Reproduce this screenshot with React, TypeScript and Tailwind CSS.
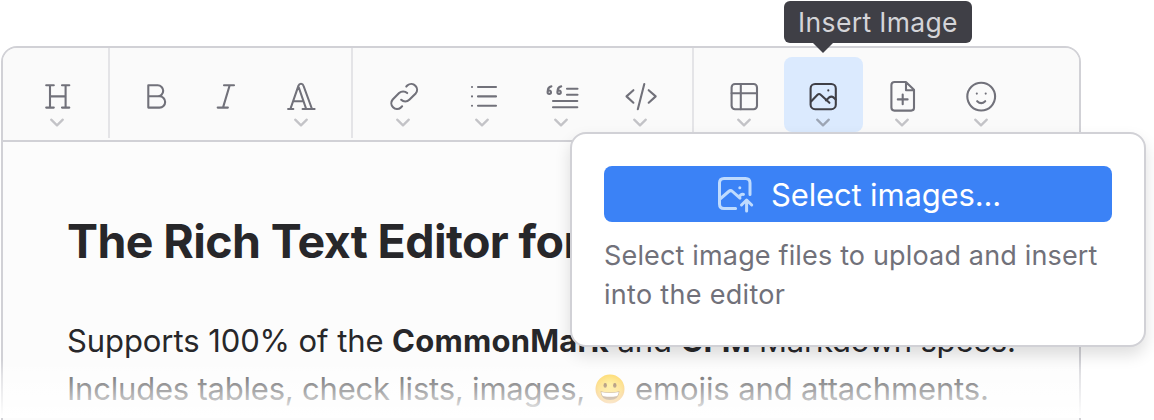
import type { ReactNode } from "react";

type ToolProps = {
  label: string;
  children: ReactNode;
  menu?: boolean;
  active?: boolean;
};

function Tool({ label, children, menu = true, active = false }: ToolProps) {
  return (
    <button
      type="button"
      aria-label={label}
      className={`flex h-[75px] shrink-0 flex-col items-center rounded-lg pt-5 ${
        menu ? "w-[79px]" : "w-[70px]"
      } ${active ? "bg-[#dbeafe] text-[#3f3f46]" : "text-[#71717a]"}`}
    >
      <svg
        viewBox="0 0 40 40"
        className="h-10 w-10 shrink-0"
        fill="none"
        stroke="currentColor"
        strokeWidth="2.1"
        strokeLinecap="round"
        strokeLinejoin="round"
      >
        {children}
      </svg>
      {menu && (
        <svg
          viewBox="0 0 16 10"
          className="h-2.5 w-4 shrink-0"
          fill="none"
          stroke="currentColor"
          strokeOpacity="0.4"
          strokeWidth="2.3"
          strokeLinecap="round"
          strokeLinejoin="round"
        >
          <path d="M2.2 2.7 8 8.3l5.8-5.6" />
        </svg>
      )}
    </button>
  );
}

function Group({ children, className }: { children: ReactNode; className: string }) {
  return (
    <div className={`flex h-[90px] shrink-0 items-start border-[#e4e4e7] pt-[9px] ${className}`}>
      {children}
    </div>
  );
}

function Toolbar() {
  return (
    <div className="flex h-[94px] shrink-0 border-b-2 border-[#d1d1d6] bg-[#fafafa] pl-1">
      <Group className="border-r-2 pl-2.5 pr-3">
        <Tool label="Heading">
          <path d="M9.2 8.3h7.6M25 8.3h7.3M9.2 30.6h7.6M25 30.6h7.3M13 8.3v22.3M28.6 8.3v22.3M13 19.4h15.6" />
        </Tool>
      </Group>
      <Group className="border-r-2 px-[11px]">
        <Tool label="Bold" menu={false}>
          <path d="M12.3 8.3h9.4a5.5 5.5 0 0 1 0 11h-9.4zM12.3 19.3h11.2a5.65 5.65 0 0 1 0 11.3H12.3z" />
        </Tool>
        <Tool label="Italic" menu={false}>
          <path d="M18 8.3h10M11.7 30.6h10.2M23.7 8.3 17 30.6" />
        </Tool>
        <Tool label="Text style">
          <path d="M7.1 32h5.2M21.6 32h12M9.4 32l8.1-23.4q.7-1.9 2.5-1.9t2.4 1.8L31 32M17.8 10.5 25.2 32M12.4 24.3h10" />
        </Tool>
      </Group>
      <Group className="border-r-2 pl-2.5 pr-[13px]">
        <Tool label="Link">
          <path d="M23.3 9.6l1.3-1.3a5.75 5.75 0 0 1 8.1 8.1l-6.4 6.4a5.75 5.75 0 0 1-8.1 0" />
          <path d="M19.1 29.3l-1.3 1.3a5.75 5.75 0 0 1-8.1-8.1l6.4-6.4a5.75 5.75 0 0 1 8.1 0" />
        </Tool>
        <Tool label="List">
          <path d="M16 10h18M16 19.4h18M16 28.7h18M10 10h.02M10 19.4h.02M10 28.7h.02" />
        </Tool>
        <Tool label="Quote">
          <path d="M26 11.7h10.5M26 17.7h10.5M12 24h24.3M12 30.3h24.3" />
          <path d="M10.4 9.4Q6.6 10 6.6 15.2a1.7 1.7 0 1 0 1.7-1.7q-1.2 0-1.7 1M20.2 9.4q-3.8.6-3.8 5.8a1.7 1.7 0 1 0 1.7-1.7q-1.2 0-1.7 1" />
        </Tool>
        <Tool label="Code">
          <path d="M13.4 13.2 6.5 19.4l6.9 6.3M28.7 13.2l7 6.2-7 6.3M24.3 7l-6.5 25.2" />
        </Tool>
      </Group>
      <Group className="px-[11px] *:pr-px">
        <Tool label="Table">
          <rect x="7.6" y="7" width="25.4" height="25.2" rx="3.4" />
          <path d="M16.8 7v25.2M7.6 16.2h25.4" />
        </Tool>
        <Tool label="Insert Image" active>
          <rect x="7.6" y="7" width="25.2" height="25.2" rx="4.5" />
          <path d="M8.3 24.3l6.2-6.5q1.6-1.6 3.2 0l8.7 8M22.9 23.4l3.2-3q2.3-1.7 4.4 0l2.2 2.2M25.3 13.4h.02" />
        </Tool>
        <Tool label="Attach File">
          <path d="M12.6 5h11.3l8.1 7.8v18q0 2.8-2.8 2.8H12.4q-3 0-3-3V8q0-3 3.2-3zM24 5.2v8h7.8M20.7 17.5v9.8M15.8 22.4h9.8" />
        </Tool>
        <Tool label="Emoji">
          <circle cx="20.2" cy="19.6" r="13.9" />
          <path d="M16.2 24.2q4 3.9 8 0M15.8 16.6h.02M24.7 16.6h.02" />
        </Tool>
      </Group>
    </div>
  );
}

function GrinningFace() {
  return (
    <svg viewBox="0 0 30 30" className="ml-[10px] mr-[10px] inline-block h-[30px] w-[30px] align-[-4px]">
      <defs>
        <radialGradient id="face" cx="50%" cy="35%" r="65%">
          <stop offset="0" stopColor="#ffe44f" />
          <stop offset="0.65" stopColor="#fcc321" />
          <stop offset="1" stopColor="#e88a10" />
        </radialGradient>
      </defs>
      <circle cx="15" cy="15" r="14.5" fill="url(#face)" />
      <ellipse cx="10.2" cy="11.4" rx="1.7" ry="2.3" fill="#70400a" />
      <ellipse cx="19.8" cy="11.4" rx="1.7" ry="2.3" fill="#70400a" />
      <path d="M5.5 17.2Q15 19.6 24.5 17.2 23.8 26 15 26T5.5 17.2z" fill="#70400a" />
      <path d="M6.3 18Q15 20.2 23.7 18q-.4 4-2.5 4.3-6.2 1-12.4 0Q6.7 22 6.3 18z" fill="#fff" />
    </svg>
  );
}

function SelectImagesIcon() {
  return (
    <svg
      viewBox="0 0 40 40"
      className="h-10 w-10"
      fill="none"
      stroke="currentColor"
      strokeWidth="3"
      strokeLinecap="round"
      strokeLinejoin="round"
    >
      <path d="M20.6 34.6H9q-4.5 0-4.5-4.5V9q0-4.5 4.5-4.5h21.5Q35 4.5 35 9v11.5" />
      <path d="M5 25l8.7-7.5q1.9-1.7 3.8 0l7.5 6.6M23.5 22.7l2-1.5q1.5-1.3 3-.8M24.8 13.7h.02" />
      <path d="M31.6 37V27M26.5 31l5.1-5 5.1 5" />
    </svg>
  );
}

export default function App() {
  return (
    <div className="relative h-[420px] w-[1154px] overflow-hidden bg-white pl-px pt-[46px] font-['Inter',sans-serif]">
      <main className="flex h-[400px] w-[1080px] flex-col overflow-hidden rounded-t-2xl border-2 border-[#d1d1d6] bg-[#fcfcfc]">
        <Toolbar />
        <article className="whitespace-nowrap pl-16 pt-[68px] text-[#27272a]">
          <h1 className="text-[46.5px] leading-[62px] font-bold tracking-[-0.6px]">
            The Rich Text Editor for Rails
          </h1>
          <p className="mt-[45px] text-[31px] leading-[48px] tracking-[-0.12px]">
            <span className="tracking-[-0.08px]">Supports 100% of the </span>
            <strong className="tracking-[0.2px]">CommonMark</strong> and <strong>GFM</strong>
            <span className="tracking-[-0.2px]"> Markdown specs.</span>
            <br />
            <span className="tracking-[-0.21px]">Includes tables, check lists, images,</span>
            <GrinningFace />
            <span>emojis and attachments.</span>
          </p>
        </article>
      </main>

      <div className="absolute inset-x-0 bottom-[2px] h-[58px] bg-[linear-gradient(to_bottom,rgba(255,255,255,0)_0px,rgba(255,255,255,0.4)_16px,rgba(255,255,255,0.72)_40px,rgba(255,255,255,0.98)_56px)]" />

      <div
        role="tooltip"
        className="absolute left-[784px] top-px flex h-[42px] w-[188px] items-center justify-center rounded-md bg-[#3f3f46] pt-0.5 text-[26.5px] tracking-[0.35px] whitespace-nowrap text-[#d4d4d8]"
      >
        Insert Image
        <svg viewBox="0 0 20 10" className="absolute left-[29px] top-[42px] h-2.5 w-5 fill-[#3f3f46]">
          <path d="M0 0h20l-10 10z" />
        </svg>
      </div>

      <section className="absolute left-[570px] top-[132px] flex h-[215px] w-[576px] flex-col rounded-2xl border-2 border-[#d1d1d6] bg-white px-8 pt-8 shadow-[0_8px_16px_rgba(0,0,0,0.13)]">
        <button
          type="button"
          className="flex h-14 w-[508px] shrink-0 items-center gap-4 rounded-lg bg-[#3b82f6] pl-[111px] text-[31px] tracking-[-0.15px] whitespace-nowrap text-white"
        >
          <span className="text-[#bfdbfe]">
            <SelectImagesIcon />
          </span>
          <span className="pt-0.5">Select images...</span>
        </button>
        <p className="mt-[14px] text-[27px] leading-[39px] tracking-[0.16px] whitespace-nowrap text-[#71717a]">
          Select image files to upload and insert
          <br />
          <span className="tracking-[0.3px]">into the editor</span>
        </p>
      </section>
    </div>
  );
}
